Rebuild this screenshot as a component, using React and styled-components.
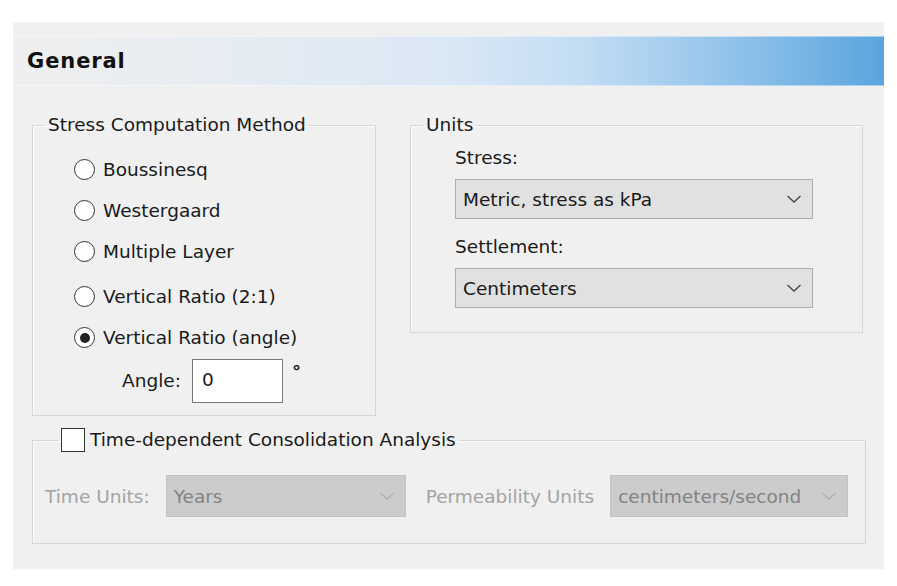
import React from "react";
import styled, { createGlobalStyle } from "styled-components";

const Global = createGlobalStyle`
  html, body {
    margin: 0;
    padding: 0;
    background: #ffffff;
  }
  body {
    font-family: "DejaVu Sans", "Liberation Sans", sans-serif;
    color: #1a1a1a;
  }
`;

const Panel = styled.div`
  margin: 22px 0 0 13px;
  width: 871px;
  height: 547px;
  background: #f0f0f0;
  display: flex;
  flex-direction: column;
`;

const Header = styled.div`
  margin-top: 14px;
  height: 50px;
  box-sizing: border-box;
  padding-left: 14px;
  display: flex;
  align-items: center;
  font-family: "DejaVu Sans", sans-serif;
  font-weight: bold;
  font-size: 21px;
  letter-spacing: 0.9px;
  color: #111;
  background: linear-gradient(
    to right,
    #efefef 0%,
    #e6ecf2 25%,
    #dae8f5 50%,
    #c4ddf3 65%,
    #93c4eb 82%,
    #5aa5df 100%
  );
  box-shadow: inset 0 1px 0 rgba(255, 255, 255, 0.45),
    inset 0 -1px 0 rgba(255, 255, 255, 0.45);
`;

const TopRow = styled.div`
  display: flex;
  align-items: flex-start;
  gap: 34px;
  margin: 28px 0 0 19px;
`;

const Group = styled.fieldset`
  box-sizing: border-box;
  margin: 0;
  padding: 0;
  min-width: 0;
  width: ${(p) => p.$w}px;
  height: ${(p) => p.$h}px;
  border: 1px solid #d6d6d6;
  box-shadow: inset 1px 1px 0 #fbfbfb;
`;

const Legend = styled.legend`
  margin-left: ${(p) => p.$indent}px;
  padding: 0 3px;
  height: ${(p) => p.$lh}px;
  line-height: ${(p) => p.$lh}px;
  font-size: 18.5px;
  display: flex;
  align-items: center;
  gap: 5px;
  color: #1a1a1a;
`;

const GroupBody = styled.div`
  padding: ${(p) => p.$pad};
  display: flex;
  flex-direction: column;
`;

const RadioRow = styled.label`
  height: 41px;
  margin-top: ${(p) => (p.$gap ? 4 : 0)}px;
  display: flex;
  align-items: center;
  gap: 8px;
  font-size: 18.5px;
`;

const RadioCircle = styled.span`
  width: 21px;
  height: 21px;
  box-sizing: border-box;
  border-radius: 50%;
  border: 1.5px solid #333;
  background: #fff;
  display: flex;
  align-items: center;
  justify-content: center;
  &::after {
    content: "";
    width: 10px;
    height: 10px;
    border-radius: 50%;
    background: ${(p) => (p.$on ? "#222" : "transparent")};
  }
`;

const AngleRow = styled.div`
  display: flex;
  align-items: flex-start;
  margin: 1px 0 0 43px;
  font-size: 18.5px;
`;

const AngleLabel = styled.span`
  width: 64px;
  text-align: right;
  line-height: 44px;
  margin-right: 11px;
`;

const AngleBox = styled.div`
  width: 91px;
  height: 44px;
  box-sizing: border-box;
  border: 1px solid #7a7a7a;
  background: #fff;
  padding-left: 9px;
  line-height: 40px;
  font-size: 18.5px;
`;

const Degree = styled.span`
  margin: 2px 0 0 9px;
  font-size: 18px;
  font-weight: bold;
`;

const FieldLabel = styled.div`
  line-height: 22px;
  font-size: 18.5px;
  margin-top: ${(p) => p.$mt}px;
`;

const Select = styled.div`
  box-sizing: border-box;
  width: ${(p) => p.$w}px;
  height: ${(p) => p.$h}px;
  margin-top: ${(p) => p.$mt || 0}px;
  padding: 0 10px 0 7px;
  display: flex;
  align-items: center;
  justify-content: space-between;
  font-size: 18.5px;
  white-space: nowrap;
  background: ${(p) => (p.$disabled ? "#cccccc" : "#e1e1e1")};
  border: 1px solid ${(p) => (p.$disabled ? "#c2c2c2" : "#adadad")};
  color: ${(p) => (p.$disabled ? "#838383" : "#1a1a1a")};
  svg {
    flex: none;
  }
`;

const Chevron = ({ color }) => (
  <svg width="16" height="10" viewBox="0 0 16 10">
    <path d="M1.5 2 L8 8 L14.5 2" fill="none" stroke={color} strokeWidth="1.3" />
  </svg>
);

const CheckBox = styled.span`
  width: 24px;
  height: 24px;
  box-sizing: border-box;
  border: 1.5px solid #333;
  background: #fff;
`;

const BottomWrap = styled.div`
  margin: 12px 0 0 19px;
`;

const OptionRow = styled.div`
  display: flex;
  align-items: center;
  padding: 23px 0 0 12px;
`;

const DimLabel = styled.span`
  font-size: 18.5px;
  color: #a3a3a3;
  white-space: nowrap;
  margin: 0 ${(p) => p.$mr}px 0 ${(p) => p.$ml || 0}px;
`;

const radios = [
  "Boussinesq",
  "Westergaard",
  "Multiple Layer",
  "Vertical Ratio (2:1)",
  "Vertical Ratio (angle)",
];

export default function App() {
  return (
    <>
      <Global />
      <Panel>
        <Header>General</Header>
        <TopRow>
          <Group $w={344} $h={302}>
            <Legend $indent={12} $lh={22}>
              Stress Computation Method
            </Legend>
            <GroupBody $pad="13px 0 0 41px">
              {radios.map((r, i) => (
                <RadioRow key={r} $gap={i === 3}>
                  <RadioCircle $on={i === 4} />
                  {r}
                </RadioRow>
              ))}
              <AngleRow>
                <AngleLabel>Angle:</AngleLabel>
                <AngleBox>0</AngleBox>
                <Degree>°</Degree>
              </AngleRow>
            </GroupBody>
          </Group>
          <Group $w={453} $h={219}>
            <Legend $indent={12} $lh={22}>
              Units
            </Legend>
            <GroupBody $pad="11px 0 0 44px">
              <FieldLabel $mt={0}>Stress:</FieldLabel>
              <Select $w={358} $h={40} $mt={10}>
                Metric, stress as kPa
                <Chevron color="#444" />
              </Select>
              <FieldLabel $mt={17}>Settlement:</FieldLabel>
              <Select $w={358} $h={40} $mt={10}>
                Centimeters
                <Chevron color="#444" />
              </Select>
            </GroupBody>
          </Group>
        </TopRow>
        <BottomWrap>
          <Group $w={834} $h={116}>
            <Legend $indent={25} $lh={24}>
              <CheckBox />
              Time-dependent Consolidation Analysis
            </Legend>
            <OptionRow>
              <DimLabel $mr={16}>Time Units:</DimLabel>
              <Select $w={240} $h={42} $disabled>
                Years
                <Chevron color="#b0b0b0" />
              </Select>
              <DimLabel $ml={20} $mr={16}>
                Permeability Units
              </DimLabel>
              <Select $w={238} $h={42} $disabled>
                centimeters/second
                <Chevron color="#b0b0b0" />
              </Select>
            </OptionRow>
          </Group>
        </BottomWrap>
      </Panel>
    </>
  );
}
